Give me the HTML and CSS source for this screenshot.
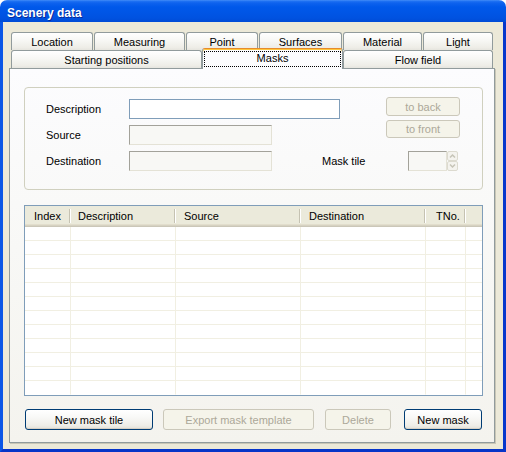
FILE: index.html
```html
<!DOCTYPE html>
<html>
<head>
<meta charset="utf-8">
<title>Scenery data</title>
<link rel="stylesheet" href="styles.css">
</head>
<body>
<div class="window">
  <div class="titlebar"><span class="title">Scenery data</span></div>
  <div class="client">
    <div class="tabs">
      <div class="tabrow back">
        <div class="tab t-location">Location</div>
        <div class="tab t-measuring">Measuring</div>
        <div class="tab t-point">Point</div>
        <div class="tab t-surfaces">Surfaces</div>
        <div class="tab t-material">Material</div>
        <div class="tab t-light">Light</div>
      </div>
      <div class="tabrow front">
        <div class="tab t-start">Starting positions</div>
        <div class="tab selected t-masks"><span class="focus">Masks</span></div>
        <div class="tab t-flow">Flow field</div>
      </div>
      <div class="panel">
        <div class="groupbox">
          <div class="grow r1">
            <span class="lbl">Description</span>
            <div class="edit active w-desc"></div>
            <button class="btn disabled side b-back">to back</button>
          </div>
          <div class="grow r2">
            <span class="lbl">Source</span>
            <div class="edit w-src"></div>
            <button class="btn disabled side b-front">to front</button>
          </div>
          <div class="grow r3">
            <span class="lbl">Destination</span>
            <div class="edit w-src"></div>
            <span class="lbl tile">Mask tile</span>
            <div class="spinner">
              <div class="edit w-spin"></div>
              <svg class="spin" width="11" height="20" viewBox="0 0 11 20">
                <rect x="0.5" y="0.5" width="10" height="9" rx="1.5" fill="#F4F3EE" stroke="#DCDACF"/>
                <rect x="0.5" y="10.5" width="10" height="9" rx="1.5" fill="#F4F3EE" stroke="#DCDACF"/>
                <path d="M3 6.5 L5.5 4 L8 6.5" fill="none" stroke="#C6C4B7" stroke-width="1.5"/>
                <path d="M3 13.5 L5.5 16 L8 13.5" fill="none" stroke="#C6C4B7" stroke-width="1.5"/>
              </svg>
            </div>
          </div>
        </div>

        <div class="listview">
          <table>
            <thead>
              <tr>
                <th class="c1">Index</th>
                <th class="c2">Description</th>
                <th class="c3">Source</th>
                <th class="c4">Destination</th>
                <th class="c5">TNo.</th>
                <th class="c6 last"></th>
              </tr>
            </thead>
            <tbody>
              <tr><td></td><td></td><td></td><td></td><td></td><td></td></tr>
              <tr><td></td><td></td><td></td><td></td><td></td><td></td></tr>
              <tr><td></td><td></td><td></td><td></td><td></td><td></td></tr>
              <tr><td></td><td></td><td></td><td></td><td></td><td></td></tr>
              <tr><td></td><td></td><td></td><td></td><td></td><td></td></tr>
              <tr><td></td><td></td><td></td><td></td><td></td><td></td></tr>
              <tr><td></td><td></td><td></td><td></td><td></td><td></td></tr>
              <tr><td></td><td></td><td></td><td></td><td></td><td></td></tr>
              <tr><td></td><td></td><td></td><td></td><td></td><td></td></tr>
              <tr><td></td><td></td><td></td><td></td><td></td><td></td></tr>
              <tr><td></td><td></td><td></td><td></td><td></td><td></td></tr>
              <tr><td></td><td></td><td></td><td></td><td></td><td></td></tr>
            </tbody>
          </table>
        </div>

        <div class="buttons">
          <button class="btn bb1">New mask tile</button>
          <button class="btn disabled bb2">Export mask template</button>
          <button class="btn disabled bb3">Delete</button>
          <button class="btn bb4">New mask</button>
        </div>
      </div>
    </div>
  </div>
</div>
</body>
</html>
```

FILE: styles.css
```css
html, body {
  margin: 0;
  padding: 0;
  background: #ffffff;
}

body {
  font-family: "Liberation Sans", Arial, sans-serif;
  font-size: 11px;
  color: #000;
}

.window {
  width: 506px;
  height: 452px;
}

.titlebar {
  box-sizing: border-box;
  height: 22px;
  padding: 4px 0 0 7px;
  border-radius: 7px 7px 0 0;
  background: linear-gradient(to bottom,
    #4A92F8 0px, #2173F3 1px, #0E62EE 3px, #0058EA 7px,
    #0055E5 13px, #0052E0 18px, #004BD6 22px);
}

.title {
  display: block;
  font-family: "Liberation Sans", Arial, sans-serif;
  font-weight: bold;
  font-size: 12px;
  line-height: 18px;
  color: #fff;
  text-shadow: 1px 1px 0 #0A2A98;
}

.client {
  box-sizing: border-box;
  height: 430px;
  background: #ECE9D8;
  border-left: 3px solid #0A56E6;
  border-right: 3px solid #0737CC;
  border-bottom: 3px solid #0735C8;
}

.tabs {
  margin-left: 6px;
  padding-top: 10px;
}

.tabrow {
  display: flex;
  padding-left: 2px;
  height: 18px;
}

.tabrow.back {
  gap: 1px;
}

.tabrow.front {
  align-items: flex-end;
}

.tab {
  box-sizing: border-box;
  height: 18px;
  border: 1px solid #919B9C;
  border-bottom: none;
  border-radius: 3px 3px 0 0;
  background: linear-gradient(to bottom, #FFFFFF 0%, #F7F7F4 45%, #EEEDE7 85%, #E6E5DE 100%);
  text-align: center;
  line-height: 18px;
  white-space: nowrap;
}

.t-location { width: 82px; }
.t-measuring { width: 91px; }
.t-point { width: 72px; }
.t-surfaces { width: 83px; }
.t-material { width: 79px; }
.t-light { width: 70px; }

.t-start { width: 191px; }
.t-masks { width: 141px; }
.t-flow { width: 150px; }

.tab.selected {
  position: relative;
  z-index: 2;
  height: 21px;
  margin-top: -2px;
  margin-bottom: -1px;
  border-top: 1px solid #E68B2C;
  box-shadow: inset 0 1px 0 #FFC73C;
  background: #FCFCFE;
}

.focus {
  display: block;
  box-sizing: border-box;
  height: 16px;
  margin: 2px 1px 0;
  border: 1px dotted #000;
  line-height: 13px;
}

.panel {
  box-sizing: border-box;
  width: 486px;
  height: 375px;
  border: 1px solid #919B9C;
  box-shadow: 1px 1px 0 #C9C6B6;
  background: linear-gradient(to bottom, #FCFCFE 0%, #F7F7F4 60%, #F4F3EE 100%);
  padding: 18px 0 0 14px;
}

.groupbox {
  box-sizing: border-box;
  width: 459px;
  height: 103px;
  border: 1px solid #D0D0BF;
  border-radius: 4px;
  padding: 9px 0 0 21px;
}

.grow {
  display: flex;
  align-items: flex-start;
}

.r1 { height: 23px; }
.r2 { height: 25px; }
.r3 { height: 26px; }

.lbl {
  display: block;
  width: 83px;
  height: 20px;
  line-height: 20px;
  white-space: nowrap;
}

.r1 .lbl, .r1 .edit { margin-top: 2px; }
.r2 .lbl, .r2 .edit { margin-top: 5px; }
.r3 .lbl, .r3 .edit, .r3 .spinner { margin-top: 6px; }

.edit {
  box-sizing: border-box;
  height: 20px;
  border: 1px solid;
  border-color: #A3A29A #E4E2D6 #E4E2D6 #A3A29A;
  background: #F8F8F5;
}

.edit.active {
  border-color: #7F9DB9;
  background: #fff;
}

.w-desc { width: 211px; }
.w-src { width: 143px; }
.w-spin { width: 39px; }

.lbl.tile {
  width: 86px;
  margin-left: 50px;
}

.spinner {
  display: flex;
}

.spinner .edit {
  margin-top: 0;
}

.spin {
  display: block;
}

.btn {
  box-sizing: border-box;
  padding: 0;
  margin: 0;
  font-family: "Liberation Sans", Arial, sans-serif;
  font-size: 11px;
  color: #000;
  border: 1px solid #003C74;
  border-radius: 3px;
  background: linear-gradient(to bottom, #FFFFFF 0%, #F8F8F6 40%, #EFEEE8 80%, #E3E1D8 100%);
  box-shadow: inset 0 -1px 0 #D6D0C5;
  text-align: center;
  white-space: nowrap;
}

.btn.disabled {
  color: #ACA899;
  border-color: #CBC8BA;
  background: #F5F4EA;
  box-shadow: none;
}

.side {
  width: 74px;
}

.b-back {
  height: 19px;
  margin-left: 46px;
}

.b-front {
  height: 18px;
  margin-left: 114px;
}

.listview {
  box-sizing: border-box;
  width: 459px;
  height: 191px;
  margin-top: 15px;
  border: 1px solid #7F9DB9;
  background: #fff;
  overflow: hidden;
}

.listview table {
  width: 457px;
  table-layout: fixed;
  border-collapse: separate;
  border-spacing: 0;
}

.listview th {
  box-sizing: border-box;
  height: 21px;
  padding: 1px 0 2px 8px;
  font-weight: normal;
  text-align: left;
  line-height: 18px;
  white-space: nowrap;
  background:
    linear-gradient(#C5C2B2, #C5C2B2) right 1px top 3px / 1px 14px no-repeat,
    linear-gradient(#FFFFFF, #FFFFFF) right 0 top 3px / 1px 14px no-repeat,
    linear-gradient(to bottom, #EBEADB 0, #EBEADB 18px, #E2DECD 18px, #E2DECD 19px,
      #D6D2C2 19px, #D6D2C2 20px, #CBC7B8 20px, #CBC7B8 21px);
}

.listview th.c1 { width: 46px; padding-left: 9px; }
.listview th.c2 { width: 105px; padding-left: 7px; }
.listview th.c3 { width: 125px; }
.listview th.c4 { width: 125px; }
.listview th.c5 { width: 40px; padding-left: 10px; }

.listview th.last {
  background: linear-gradient(to bottom, #EBEADB 0, #EBEADB 18px, #E2DECD 18px, #E2DECD 19px,
      #D6D2C2 19px, #D6D2C2 20px, #CBC7B8 20px, #CBC7B8 21px);
}

.listview td {
  box-sizing: border-box;
  height: 14px;
  padding: 0;
  border-right: 1px solid #F1EFE2;
  border-bottom: 1px solid #F1EFE2;
}

.listview td:last-child {
  border-right: none;
}

.listview tbody tr:last-child td {
  border-bottom-color: transparent;
}

.buttons {
  display: flex;
  margin-top: 13px;
}

.buttons .btn {
  height: 21px;
}

.bb1 { width: 128px; margin-left: 1px; }
.bb2 { width: 151px; margin-left: 10px; }
.bb3 { width: 66px; margin-left: 11px; }
.bb4 { width: 78px; margin-left: 13px; }
```
